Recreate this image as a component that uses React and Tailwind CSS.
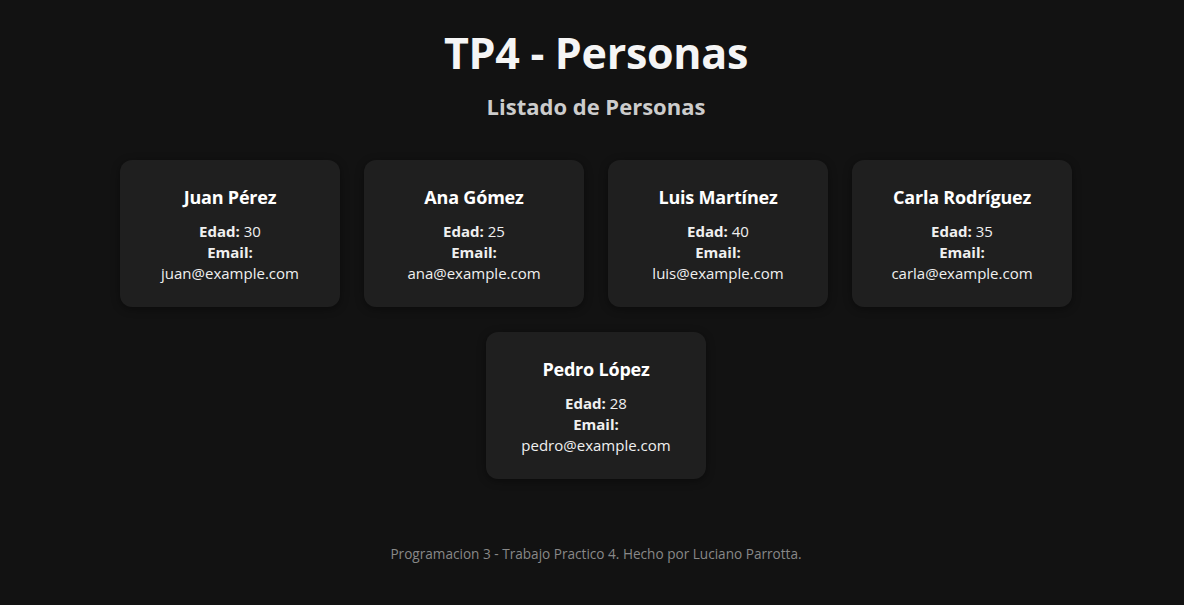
import React from "react";

const personas = [
  { nombre: "Juan Pérez", edad: 30, email: "juan@example.com" },
  { nombre: "Ana Gómez", edad: 25, email: "ana@example.com" },
  { nombre: "Luis Martínez", edad: 40, email: "luis@example.com" },
  { nombre: "Carla Rodríguez", edad: 35, email: "carla@example.com" },
  { nombre: "Pedro López", edad: 28, email: "pedro@example.com" },
];

export default function App() {
  return (
    <div
      className="min-h-[605px] bg-[#121212] text-white pl-[8px] flex flex-col items-center"
      style={{ fontFamily: '"Open Sans", "Noto Sans", sans-serif' }}
    >
      <h1 className="mt-[25px] text-[43px] leading-[56px] font-bold text-[#f5f5f5] tracking-[-0.3px]">
        TP4 - Personas
      </h1>
      <h2 className="mt-[10px] text-[22px] leading-[30px] font-bold text-[#cccccc]">
        Listado de Personas
      </h2>
      <div className="mt-[39px] flex flex-wrap justify-center gap-x-[24px] gap-y-[25px] max-w-[960px]">
        {personas.map((p) => (
          <div
            key={p.nombre}
            className="w-[220px] h-[147px] rounded-[12px] bg-[#1f1f1f] shadow-[0_2px_8px_rgba(0,0,0,0.4)] pt-[25px] flex flex-col items-center text-center"
          >
            <h3 className="text-[18px] leading-[24px] font-bold text-white tracking-[-0.2px]">{p.nombre}</h3>
            <div className="mt-[12px] text-[15px] leading-[21px] text-[#f0f0f0]">
              <div>
                <span className="font-bold">Edad:</span> {p.edad}
              </div>
              <div className="font-bold">Email:</div>
              <div>{p.email}</div>
            </div>
          </div>
        ))}
      </div>
      <footer className="mt-[66px] text-[13.6px] leading-[18px] text-[#888888]">
        Programacion 3 - Trabajo Practico 4. Hecho por Luciano Parrotta.
      </footer>
    </div>
  );
}
